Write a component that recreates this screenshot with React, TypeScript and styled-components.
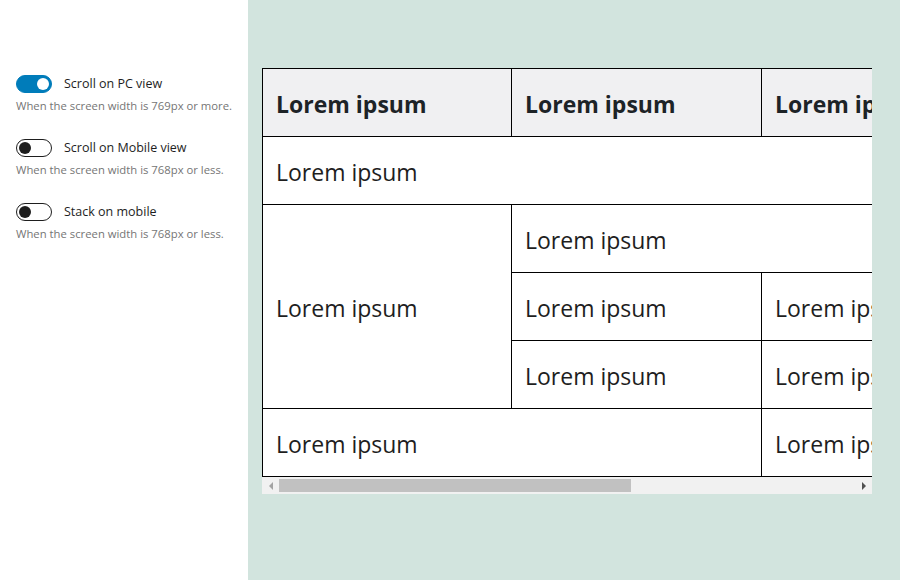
import React from "react";
import styled, { createGlobalStyle } from "styled-components";

const Global = createGlobalStyle`
  html, body { margin: 0; padding: 0; }
  body { font-family: "Open Sans", "Noto Sans", sans-serif; background: #fff; }
`;

const Page = styled.div`
  display: flex;
  width: 900px;
  height: 580px;
  overflow: hidden;
`;

const Sidebar = styled.aside`
  width: 248px;
  flex: none;
  background: #fff;
  padding: 74px 0 0 16px;
  box-sizing: border-box;
  display: flex;
  flex-direction: column;
  gap: 25px;
`;

const Setting = styled.div`
  display: flex;
  flex-direction: column;
  gap: 5px;
`;

const ToggleRow = styled.label`
  display: flex;
  align-items: center;
  gap: 12px;
  font-size: 12.5px;
  color: #1e1e1e;
  line-height: 20px;
`;

const Track = styled.span<{ $on: boolean }>`
  position: relative;
  width: 36px;
  height: 18px;
  box-sizing: border-box;
  border-radius: 9px;
  flex: none;
  background: ${(p) => (p.$on ? "#007cba" : "#fff")};
  border: 1px solid ${(p) => (p.$on ? "#007cba" : "#1e1e1e")};
`;

const Knob = styled.span<{ $on: boolean }>`
  position: absolute;
  top: 2px;
  left: ${(p) => (p.$on ? "20px" : "2px")};
  width: 12px;
  height: 12px;
  border-radius: 50%;
  background: ${(p) => (p.$on ? "#fff" : "#1e1e1e")};
`;

const Help = styled.p`
  margin: 0;
  font-size: 11.3px;
  line-height: 14px;
  color: #757575;
`;

const Canvas = styled.main`
  flex: 1;
  background: #d2e4de;
  padding: 68px 28px 0 14px;
  box-sizing: border-box;
`;

const Frame = styled.div`
  width: 610px;
  display: flex;
  flex-direction: column;
`;

const Scroller = styled.div`
  overflow: hidden;
  background: #fff;
`;

const Table = styled.table`
  border-collapse: collapse;
  table-layout: fixed;
  width: 999px;
  font-size: 23px;
  color: #1e1e1e;
`;

const Col = styled.col<{ $w: number }>`
  width: ${(p) => p.$w}px;
`;

const Th = styled.th`
  height: 68px;
  box-sizing: border-box;
  border: 1px solid #000;
  background: #f0f0f2;
  text-align: left;
  font-weight: 700;
  padding: 2px 13px 0;
  white-space: nowrap;
  color: #1d2327;
`;

const Td = styled.td`
  height: 68px;
  box-sizing: border-box;
  border: 1px solid #000;
  padding: 2px 13px 0;
  white-space: nowrap;
  font-weight: 400;
`;

const Bar = styled.div`
  display: flex;
  height: 17px;
  background: #f1f1f1;
`;

const Arrow = styled.div<{ $dir: "left" | "right"; $active: boolean }>`
  width: 17px;
  flex: none;
  display: flex;
  align-items: center;
  justify-content: center;
  &::before {
    content: "";
    width: 0;
    height: 0;
    border-top: 4px solid transparent;
    border-bottom: 4px solid transparent;
    ${(p) =>
      p.$dir === "left"
        ? `border-right: 4px solid ${p.$active ? "#505050" : "#a3a3a3"};`
        : `border-left: 4px solid ${p.$active ? "#505050" : "#a3a3a3"};`}
  }
`;

const Rail = styled.div`
  flex: 1;
  display: flex;
  align-items: center;
`;

const Thumb = styled.div`
  height: 13px;
  background: #c1c1c1;
`;

const settings = [
  { label: "Scroll on PC view", help: "When the screen width is 769px or more.", on: true },
  { label: "Scroll on Mobile view", help: "When the screen width is 768px or less.", on: false },
  { label: "Stack on mobile", help: "When the screen width is 768px or less.", on: false },
];

const L = "Lorem ipsum";
const VISIBLE = 610;
const CONTENT = 999;
const COLS = [249, 250, 250, 250];

export default function App() {
  return (
    <>
      <Global />
      <Page>
        <Sidebar>
          {settings.map((s) => (
            <Setting key={s.label}>
              <ToggleRow>
                <Track $on={s.on}>
                  <Knob $on={s.on} />
                </Track>
                {s.label}
              </ToggleRow>
              <Help>{s.help}</Help>
            </Setting>
          ))}
        </Sidebar>
        <Canvas>
          <Frame>
            <Scroller>
              <Table>
                <colgroup>
                  {COLS.map((w, i) => (
                    <Col key={i} $w={w} />
                  ))}
                </colgroup>
                <thead>
                  <tr>
                    <Th>{L}</Th>
                    <Th>{L}</Th>
                    <Th>{L}</Th>
                    <Th>{L}</Th>
                  </tr>
                </thead>
                <tbody>
                  <tr>
                    <Td colSpan={4}>{L}</Td>
                  </tr>
                  <tr>
                    <Td rowSpan={3}>{L}</Td>
                    <Td colSpan={3}>{L}</Td>
                  </tr>
                  <tr>
                    <Td>{L}</Td>
                    <Td>{L}</Td>
                    <Td>{L}</Td>
                  </tr>
                  <tr>
                    <Td>{L}</Td>
                    <Td>{L}</Td>
                    <Td>{L}</Td>
                  </tr>
                  <tr>
                    <Td colSpan={2}>{L}</Td>
                    <Td>{L}</Td>
                    <Td>{L}</Td>
                  </tr>
                </tbody>
              </Table>
            </Scroller>
            <Bar>
              <Arrow $dir="left" $active={false} />
              <Rail>
                <Thumb style={{ width: `${(VISIBLE / CONTENT) * 100}%` }} />
              </Rail>
              <Arrow $dir="right" $active={true} />
            </Bar>
          </Frame>
        </Canvas>
      </Page>
    </>
  );
}
